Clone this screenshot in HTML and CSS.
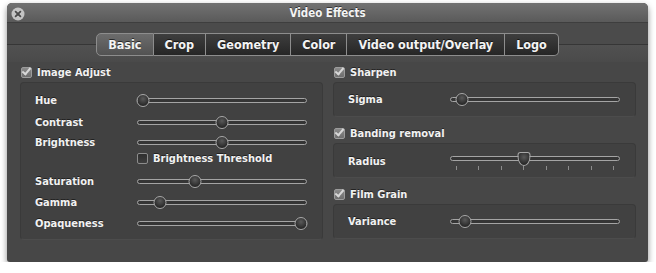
FILE: index.html
```html
<!DOCTYPE html>
<html>
<head>
    <meta charset="utf-8">
    <title>Video Effects</title>
    <link rel="stylesheet" href="styles.css">
</head>
<body>
    <div class="window">
        <div class="titlebar">
            <span class="close">
                <svg width="14" height="14" viewBox="0 0 14 14">
                    <circle cx="7" cy="7" r="6.5" fill="#c4c4c4"/>
                    <path d="M4.6 4.6 L9.4 9.4 M9.4 4.6 L4.6 9.4" stroke="#4a4a4a" stroke-width="1.8" stroke-linecap="round"/>
                </svg>
            </span>
            <span class="title">Video Effects</span>
        </div>

        <div class="toolbar">
            <div class="tabs">
                <span class="tab selected">Basic</span>
                <span class="tab">Crop</span>
                <span class="tab">Geometry</span>
                <span class="tab">Color</span>
                <span class="tab">Video output/Overlay</span>
                <span class="tab">Logo</span>
            </div>
        </div>

        <div class="content">
            <div class="column">
                <div class="group-head">
                    <span class="check on"></span>
                    <span>Image Adjust</span>
                </div>
                <div class="group-box tall">
                    <div class="row">
                        <span class="label">Hue</span>
                        <span class="slider"><span class="range"><span class="knob" style="left: 0%"></span></span></span>
                    </div>
                    <div class="row">
                        <span class="label">Contrast</span>
                        <span class="slider"><span class="range"><span class="knob" style="left: 50%"></span></span></span>
                    </div>
                    <div class="row short">
                        <span class="label">Brightness</span>
                        <span class="slider"><span class="range"><span class="knob" style="left: 50%"></span></span></span>
                    </div>
                    <div class="row sub">
                        <span class="label"></span>
                        <span class="check"></span>
                        <span class="sub-text">Brightness Threshold</span>
                    </div>
                    <div class="row low first-low">
                        <span class="label">Saturation</span>
                        <span class="slider"><span class="range"><span class="knob" style="left: 33%"></span></span></span>
                    </div>
                    <div class="row low">
                        <span class="label">Gamma</span>
                        <span class="slider"><span class="range"><span class="knob" style="left: 10.5%"></span></span></span>
                    </div>
                    <div class="row low">
                        <span class="label">Opaqueness</span>
                        <span class="slider"><span class="range"><span class="knob" style="left: 100%"></span></span></span>
                    </div>
                </div>
            </div>

            <div class="column">
                <div class="group-head">
                    <span class="check on"></span>
                    <span>Sharpen</span>
                </div>
                <div class="group-box">
                    <div class="row">
                        <span class="label">Sigma</span>
                        <span class="slider"><span class="range"><span class="knob" style="left: 3.5%"></span></span></span>
                    </div>
                </div>

                <div class="group-head">
                    <span class="check on"></span>
                    <span>Banding removal</span>
                </div>
                <div class="group-box">
                    <div class="row ticked">
                        <span class="label">Radius</span>
                        <span class="slider-wrap">
                            <span class="slider"><span class="range"><span class="knob pointer" style="left: 42.9%"></span></span></span>
                            <span class="ticks">
                                <i></i><i></i><i></i><i></i><i></i><i></i><i></i><i></i>
                            </span>
                        </span>
                    </div>
                </div>

                <div class="group-head">
                    <span class="check on"></span>
                    <span>Film Grain</span>
                </div>
                <div class="group-box">
                    <div class="row">
                        <span class="label">Variance</span>
                        <span class="slider"><span class="range"><span class="knob" style="left: 5.4%"></span></span></span>
                    </div>
                </div>
            </div>
        </div>
    </div>
</body>
</html>
```

FILE: styles.css
```css
body {
    margin: 0;
    background-color: #fff;
    font-family: "DejaVu Sans Condensed", "DejaVu Sans", sans-serif;
    font-weight: bold;
    color: #f2f2f2;
}

.window {
    width: 641px;
    height: 259px;
    margin: 3px 0 0 7px;
    background-color: #474747;
    border-radius: 5px 5px 3px 3px;
    box-shadow: 0 3px 6px rgba(0,0,0,0.45);
    overflow: hidden;
}

/* title bar */

.titlebar {
    height: 19px;
    display: flex;
    align-items: center;
    justify-content: center;
    position: relative;
    background: linear-gradient(to bottom, #727272, #5a5a5a);
    border-bottom: 1px solid #3e3e3e;
}

.close {
    position: absolute;
    left: 4px;
    top: 3px;
    height: 14px;
}

.title {
    font-size: 11.5px;
    color: #f4f4f4;
    text-shadow: 0 -1px 0 rgba(0,0,0,0.5);
}

/* tabs */

.toolbar {
    padding: 10px 0 6px;
    background: linear-gradient(to bottom, #4b4b4b 21px, #363636 21px, #363636 22px, #515151 22px, #4a4a4a 100%);
}

.tabs {
    display: flex;
    justify-content: center;
}

.tab {
    height: 21px;
    display: flex;
    align-items: center;
    padding: 0 11px;
    font-size: 12.5px;
    color: #f4f4f4;
    background: linear-gradient(to bottom, #3e3e3e, #262626);
    border: 1px solid #8d8d8d;
    border-left: none;
    text-shadow: 0 -1px 0 rgba(0,0,0,0.6);
}

.tab:first-child {
    border-left: 1px solid #8d8d8d;
    border-radius: 5px 0 0 5px;
}

.tab:last-child {
    border-radius: 0 5px 5px 0;
}

.tab.selected {
    background: linear-gradient(to bottom, #6c6c6c, #525252);
}

/* columns and groups */

.content {
    display: flex;
    gap: 10px;
    padding: 0 12px 0 13px;
}

.column {
    width: 303px;
}

.group-head {
    height: 20px;
    display: flex;
    align-items: center;
    gap: 5px;
    font-size: 11px;
    padding-left: 1px;
    text-shadow: 0 -1px 0 rgba(0,0,0,0.5);
}

.group-box + .group-head {
    margin-top: 6px;
}

.group-box {
    height: 33px;
    background-color: #414141;
    border: 1px solid #3a3a3a;
    border-bottom-color: #4c4c4c;
    border-radius: 4px;
}

.group-box.tall {
    height: 150px;
    padding-top: 6px;
}

.group-box.tall .row {
    height: 22px;
}

.group-box.tall .row.short {
    height: 18px;
}

.group-box.tall .row.sub {
    height: 14px;
}

.group-box.tall .row.low {
    height: 21px;
}

.group-box.tall .row.first-low {
    margin-top: 6px;
}

.row {
    height: 33px;
    display: flex;
    align-items: center;
    font-size: 11px;
    padding: 0 15px 0 14px;
    text-shadow: 0 -1px 0 rgba(0,0,0,0.5);
}

.row.ticked {
    align-items: flex-start;
    padding-top: 12px;
    box-sizing: border-box;
}

.row.ticked .label {
    margin-top: -1px;
}

.label {
    width: 102px;
    flex: none;
}

.sub-text {
    margin-left: 5px;
}

/* checkboxes */

.check {
    width: 9px;
    height: 9px;
    flex: none;
    border: 1px solid #8c8c8c;
    border-radius: 2px;
    background: linear-gradient(to bottom, #2e2e2e, #3e3e3e);
    position: relative;
}

.check.on {
    background: linear-gradient(to bottom, #8a8a8a, #6e6e6e);
    border-color: #9c9c9c;
}

.check.on::after {
    content: "";
    position: absolute;
    left: 2px;
    top: -2px;
    width: 3px;
    height: 7px;
    border-right: 2px solid #d8d8d8;
    border-bottom: 2px solid #d8d8d8;
    transform: rotate(40deg);
}

/* sliders */

.slider-wrap {
    flex: 1;
}

.slider {
    flex: 1;
    display: block;
    height: 3px;
    border: 1px solid #a4a4a4;
    border-radius: 3px;
    background-color: #353535;
    position: relative;
}

.range {
    position: absolute;
    left: 5px;
    right: 5px;
    top: 0;
    bottom: 0;
}

.knob {
    position: absolute;
    top: -5px;
    width: 11px;
    height: 11px;
    transform: translateX(-50%);
    border: 1px solid #a8a8a8;
    border-radius: 50%;
    background: radial-gradient(circle at 50% 35%, #5a5a5a, #262626 75%);
}

.pointer {
    border-radius: 3px 3px 50% 50% / 3px 3px 70% 70%;
    height: 12px;
    top: -5px;
}

.ticks {
    display: flex;
    justify-content: space-between;
    padding: 5px 6px 0;
}

.ticks i {
    width: 1px;
    height: 4px;
    background-color: #8c8c8c;
}
```
